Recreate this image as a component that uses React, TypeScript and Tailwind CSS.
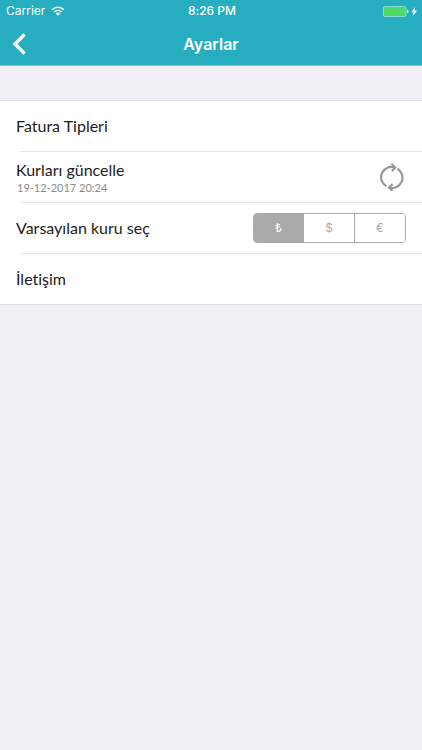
import { useState } from 'react'
import type { ReactNode } from 'react'

const currencies = [
  { code: 'TRY', symbol: '₺' },
  { code: 'USD', symbol: '$' },
  { code: 'EUR', symbol: '€' },
]

function WifiIcon() {
  return (
    <svg className="h-[10px] w-[14px]" viewBox="0 0 14 10" fill="none" stroke="currentColor" strokeWidth="1.6" aria-hidden="true">
      <path d="M1.200 3.600a8.300 8.300 0 0 1 11.600 0" />
      <path d="M3.200 6a5.500 5.500 0 0 1 7.600 0" />
      <path d="M4.700 7.600a3.200 3.200 0 0 1 4.600 0L7 9.800z" fill="currentColor" stroke="none" />
    </svg>
  )
}

function BatteryIcon() {
  return (
    <svg className="h-[11px] w-[35px]" viewBox="0 0 35 11" aria-hidden="true">
      <rect x="0.5" y="0.5" width="22.5" height="10" rx="1.5" fill="#4cd964" stroke="#8fd9dc" />
      <path d="M24 3.800c1 .2 1.500.8 1.500 1.700S25 7 24 7.200z" fill="#d9f3f5" />
      <path d="M32 .8 28.600 6.200h2.200L29.600 10.200l4.600-5.600h-2.600z" fill="#fff" />
    </svg>
  )
}

function BackIcon() {
  return (
    <svg className="h-[22px] w-[14px]" viewBox="0 0 14 22" fill="none" stroke="currentColor" strokeWidth="3.400" aria-hidden="true">
      <path d="M12.600 1.400 3 11l9.600 9.600" />
    </svg>
  )
}

function RefreshIcon() {
  return (
    <svg className="h-7 w-6" viewBox="0 0 24 28" fill="none" stroke="currentColor" strokeWidth="2.200" aria-hidden="true">
      <path d="M6.200 23.200A10.400 10.400 0 0 1 14.800 4.400" />
      <path d="M11.600 1 15.200 4.500l-3.200 3.500" />
      <path d="M17.600 5.800A10.400 10.400 0 0 1 9.200 24.600" />
      <path d="M12.600 21 9 24.500l3.400 3.300" />
    </svg>
  )
}

function Row({ children }: { children: ReactNode }) {
  return (
    <li className="group">
      <div className="flex h-[50px] items-center justify-between px-4">{children}</div>
      <div className="ml-5 h-px bg-[#e7e7e9] group-last:ml-0 group-last:bg-[#dcdce0]" />
    </li>
  )
}

export default function App() {
  const [currency, setCurrency] = useState('TRY')

  return (
    <div className="min-h-screen bg-[#efeff5] font-['Lato','Noto_Sans',sans-serif] text-base text-[#1c1c1c] [font-variant-ligatures:none]">
      <header className="border-b border-[#7fc3cf] bg-[#26adc0] font-['Inter',sans-serif] text-white">
        <div className="grid h-[22px] grid-cols-3 items-center pl-[6px] pr-1 text-xs">
          <div className="flex items-center gap-[6px]">
            <span>Carrier</span>
            <WifiIcon />
          </div>
          <span className="text-center font-medium">8:26 PM</span>
          <div className="flex justify-end">
            <BatteryIcon />
          </div>
        </div>
        <div className="grid h-[43px] grid-cols-[48px_1fr_48px] items-center">
          <button aria-label="Geri" className="flex h-full items-center pl-3">
            <BackIcon />
          </button>
          <h1 className="text-center text-base font-semibold">Ayarlar</h1>
        </div>
      </header>

      <ul className="mt-[34px] border-t border-[#e3e3e8] bg-white">
        <Row>
          <span>Fatura Tipleri</span>
        </Row>
        <Row>
          <div className="flex flex-col pt-0.5">
            <span className="leading-5">Kurları güncelle</span>
            <span className="pl-px text-[11px] leading-4 text-[#8a8a8a]">19-12-2017 20:24</span>
          </div>
          <button aria-label="Kurları güncelle" className="pr-[2px] text-[#979797]">
            <RefreshIcon />
          </button>
        </Row>
        <Row>
          <span id="currency-label">Varsayılan kuru seç</span>
          <div
            role="group"
            aria-labelledby="currency-label"
            className="grid h-[30px] w-[153px] grid-cols-3 divide-x divide-[#aaaaaa] overflow-hidden rounded border border-[#aaaaaa] font-['Inter',sans-serif] text-xs"
          >
            {currencies.map(({ code, symbol }) => (
              <button
                key={code}
                aria-label={code}
                aria-pressed={currency === code}
                onClick={() => setCurrency(code)}
                className={currency === code ? 'bg-[#aaaaaa] text-white' : 'bg-white text-[#aaaaaa]'}
              >
                {symbol}
              </button>
            ))}
          </div>
        </Row>
        <Row>
          <span>İletişim</span>
        </Row>
      </ul>
    </div>
  )
}
